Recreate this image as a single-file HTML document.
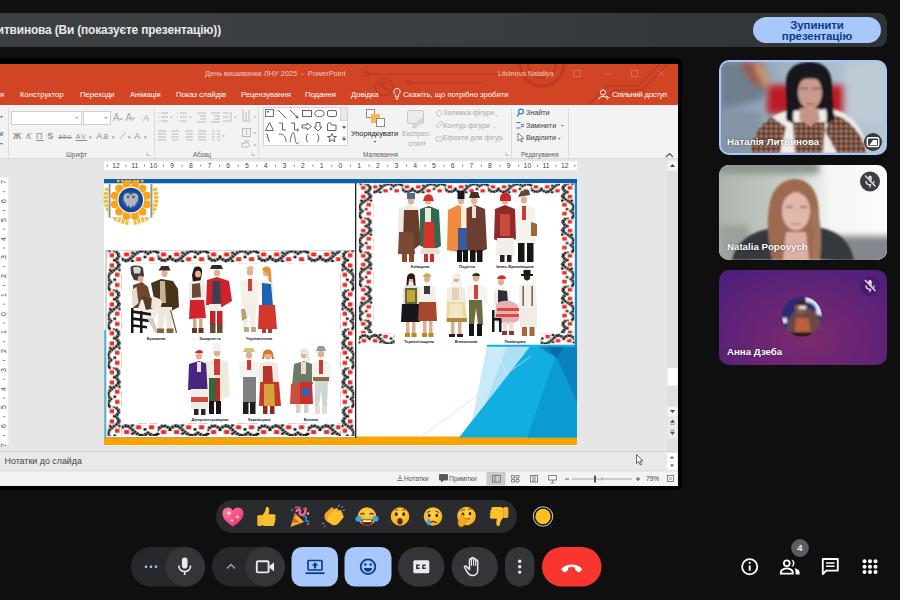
<!DOCTYPE html>
<html lang="uk">
<head>
<meta charset="utf-8">
<title>Meet</title>
<style>
*{box-sizing:border-box;margin:0;padding:0}
html,body{width:900px;height:600px;overflow:hidden;background:#101010;font-family:"Liberation Sans",sans-serif}
.abs{position:absolute}
#stage{position:relative;width:900px;height:600px;overflow:hidden;background:#0f0f10}
#topbar{left:-10px;top:13px;width:897px;height:34px;background:linear-gradient(90deg,#3c4043 0%,#393d40 55%,#2f3235 100%);border-radius:9px}
#toptitle{left:-200px;top:22px;width:421px;text-align:right;color:#e8eaed;font-size:11.9px;font-weight:bold;letter-spacing:-.15px;white-space:nowrap;line-height:17px}
#stopbtn{left:753px;top:17px;width:128px;height:26px;border-radius:13px;background:#a8c7fa;color:#0b3d8c;font-size:11.5px;font-weight:bold;line-height:10.4px;text-align:center;padding-top:3.2px;letter-spacing:-.1px}
#pptframe{left:-5px;top:58px;width:687px;height:432px;background:#000;border-radius:6px}
#ppt{left:0;top:64px;width:678px;height:422px;background:#e6e6e6;overflow:hidden}
#pptred{left:0;top:0;width:678px;height:41px;background:#d14524}
#ribbon{left:0;top:41px;width:678px;height:54px;background:#f3f3f3;border-bottom:1px solid #dadada}
.t{position:absolute;white-space:nowrap;line-height:10px}
.tt{color:#fff;font-size:7.65px;top:26px}
.ti{color:rgba(255,255,255,.72);font-size:7.4px;top:5px}
.rl{color:#3b3b3b;font-size:7.2px}
.rg{color:#a9a9a9;font-size:7.2px}
.gl{color:#5f5f5f;font-size:6.4px;top:86px}
.sep{position:absolute;top:44px;width:1px;height:50px;background:#dcdcdc}
.ru{position:absolute;color:#444;font-size:6.8px;line-height:8px;top:97.8px;width:12px;text-align:center;margin-left:-6px}
.rv{position:absolute;color:#444;font-size:7px;line-height:8px;left:0;width:8px;text-align:center;transform:rotate(-90deg);margin-top:-4px}
.sb{color:#555;font-size:6.6px;top:409.5px}
.nm{position:absolute;color:#fff;font-weight:bold;font-size:9.7px;white-space:nowrap;line-height:12px;text-shadow:0 0 2px rgba(0,0,0,.55)}
.tile{position:absolute;left:719px;width:168px;height:95px;border-radius:10px;overflow:hidden}
</style>
</head>
<body>
<div id="stage">
  <div class="abs" id="topbar"></div>
  <div class="abs" id="toptitle">Наталія Литвинова (Ви (показуєте презентацію))</div>
  <div class="abs" id="stopbtn">Зупинити<br>презентацію</div>
  <div class="abs" id="pptframe"></div>
  <div class="abs" id="ppt">
    <div class="abs" id="pptred"></div>
    <div class="abs" id="ribbon"></div>
    <svg class="abs" style="left:0;top:0" width="678" height="422" viewBox="0 64 678 422">
      <!-- title bar circuit decoration -->
      <g fill="none" stroke="#b43a1c" stroke-width="1.6" opacity=".75">
        <path d="M367 74H500"/><circle cx="367" cy="74" r="2.2"/>
        <path d="M409 83H482"/><circle cx="409" cy="83" r="2"/>
        <circle cx="384" cy="87" r="8.5"/><path d="M380 83l8 8M380 83h5M380 83v5" stroke-width="2"/>
        <path d="M520 64a22 22 0 0 0 44 0" stroke-width="3"/><path d="M528 64a14 14 0 0 0 28 0" stroke-width="2.5"/>
        <path d="M590 104l18-18h30l22-22M600 104l14-14h28l26-26"/>
      </g>
      <!-- window buttons -->
      <g stroke="rgba(255,255,255,.22)" stroke-width="1" fill="none">
        <rect x="573.5" y="70.500" width="7" height="6"/><path d="M605 74h6M631.500 70.500h6v6h-6zM658 70.500l6 6m0-6l-6 6"/>
      </g>
      <!-- bulb + share icons -->
      <g stroke="#fff" stroke-width="1" fill="none">
        <path d="M395.500 94.500a3.200 3.200 0 1 1 3 0v2.500h-3zM395.500 99h3"/>
        <circle cx="603" cy="92.500" r="2.600"/><path d="M598.500 99.500c.5-4 8.500-4 9 0M606 96l3.500 2"/>
      </g>
      <!-- Font group -->
      <g>
        <rect x="11.500" y="111.500" width="70" height="13" fill="#fff" stroke="#d0d0d0"/>
        <rect x="83.500" y="111.500" width="27" height="13" fill="#fff" stroke="#d0d0d0"/>
        <path d="M75 117l1.800 2 1.800-2zM104 117l1.800 2 1.800-2z" fill="#aaa"/>
        <path d="M0 116l1.500 2 1.500-2zM0 143l1.500 2 1.500-2z" fill="#666"/>
      </g>
      <!-- Paragraph group icons (greyed) -->
      <g stroke="#b9b9b9" stroke-width="1" fill="none">
        <path d="M158 113h1M158 117h1M158 121h1M161 113h7M161 117h7M161 121h7"/>
        <path d="M177 113h1M177 117h1M177 121h1M180 113h7M180 117h7M180 121h7"/>
        <path d="M197 113h9M200 116h6M200 119h6M197 122h9M211 113h9M214 116h6M214 119h6M211 122h9"/>
        <path d="M223 113h6M223 117h6M223 121h6M231 112v10"/>
        <path d="M158 131h8M158 134h8M158 137h8M158 140h8M171 131h8M172 134h6M171 137h8M172 140h6M185 131h8M186 134h7M185 137h8M186 140h7M198 131h8M198 134h8M198 137h8M198 140h8"/>
        <path d="M212 131h3M212 134h3M212 137h3M212 140h3M217 131h3M217 134h3M217 137h3M217 140h3"/>
        <path d="M243 110v10M246 112v8M249 110v10M242 121h9"/>
        <rect x="242.500" y="128.500" width="8" height="8"/><path d="M246.500 130v5"/>
        <path d="M242 143h6l2 2-2 2h-6zM244 141h5"/>
      </g>
      <path d="M170 116.500l1.300 1.500 1.300-1.500zM189 116.500l1.300 1.500 1.300-1.500zM234 116.500l1.300 1.500 1.300-1.500zM222 135.500l1.300 1.500 1.300-1.500zM253.500 116.500l1.300 1.500 1.300-1.500zM253.500 132.500l1.300 1.500 1.300-1.500zM253.500 144.500l1.300 1.500 1.300-1.500z" fill="#999"/>
      <!-- Shapes gallery -->
      <rect x="263.500" y="107.500" width="84" height="38" fill="#fff" stroke="#d4d4d4"/>
      <rect x="340.500" y="107.500" width="7" height="13" fill="#e9e9e9" stroke="#d4d4d4"/>
      <path d="M342.500 126.500l1.600 2 1.600-2zM342.500 138.500l1.600 2 1.600-2zM342 137h3.400" fill="#444" stroke="#444" stroke-width=".5"/>
      <g stroke="#555" stroke-width=".9" fill="none">
        <rect x="265.500" y="109.500" width="8" height="7" stroke="#3b6fb5"/><rect x="267" y="111" width="2" height="1.500" fill="#3b6fb5" stroke="none"/>
        <path d="M278 110l8 8M290 110l8 8M297 115.500l1.200 2.800-2.800-1.200"/>
        <rect x="302.500" y="110.500" width="9" height="6"/><ellipse cx="319.500" cy="113.500" rx="4.700" ry="3.200"/><rect x="327.500" y="110.500" width="9" height="6" rx="1.500"/>
        <path d="M265.500 130.500l4-8 4 8zM279 123h3.500v7H286M291 123h3.500v7h3.500M297 128.500l1.800 1.500-1.800 1.500"/>
        <path d="M302 125h5v-2l4.500 3.500-4.500 3.500v-2h-5zM316 122.500h4v4.500h2l-4 4-4-4h2zM327.500 130.500v-5.500c0-3 4-3 4 0h4.500v5.500z"/>
        <path d="M266 134l2 1-1 2 2 1-1 2 2 1.500M279 134c5 0 7 3 7 8M290 142c2-12 4-12 5-4s3 6 4 4"/>
        <path d="M308 134c-2 0-1 3-2 4 1 1 0 4 2 4M317 134c2 0 1 3 2 4-1 1 0 4-2 4"/>
        <path d="M332 133.500l1.300 3h3.200l-2.600 2 1 3.200-2.900-1.900-2.900 1.900 1-3.200-2.600-2h3.200z"/>
      </g>
      <!-- Arrange icon -->
      <g>
        <rect x="366.500" y="109.500" width="8" height="8" fill="#fff" stroke="#8a8a8a"/>
        <rect x="371" y="114" width="9" height="9" fill="#f5b65a"/>
        <rect x="376.500" y="118.500" width="8" height="8" fill="#fff" stroke="#8a8a8a"/>
        <path d="M373.500 141l1.400 1.800 1.400-1.800z" fill="#555"/>
      </g>
      <!-- Express styles (greyed) -->
      <g stroke="#c6c6c6" fill="none">
        <rect x="407.500" y="110.500" width="16" height="13" rx="2" fill="#ececec"/><path d="M412 127l10-9 2 2-9 8z" fill="#dcdcdc"/>
        <path d="M436 113l3-3 3 3-3 4zM436 126l5-5 2 2-5 5zM436 137h6v4h-6z"/>
      </g>
      <path d="M423.500 142.500l1.200 1.500 1.200-1.500zM495 115l1.200 1.500 1.200-1.500zM493 127l1.200 1.500 1.200-1.500zM501 138.500l1.200 1.500 1.200-1.500z" fill="#bbb"/>
      <!-- Editing icons -->
      <g fill="none">
        <circle cx="521" cy="111.500" r="2.400" stroke="#2b79c2" stroke-width="1.100"/><path d="M519.300 113.500l-2.300 2.800" stroke="#2b79c2" stroke-width="1.200"/>
        <path d="M516.500 122.500h4M516.500 128h4" stroke="#2b79c2" stroke-width="1"/><path d="M521 124.500h3M521 126.500h3" stroke="#8a4fa0" stroke-width="1"/>
        <path d="M518 133v8l2-2 1.500 3 1-.5-1.500-3h3z" stroke="#666" stroke-width=".8" fill="#fff"/>
      </g>
      <path d="M561 125l1.300 1.600 1.300-1.600zM558 138l1.300 1.600 1.300-1.600z" fill="#555"/>
      <!-- dialog launchers -->
      <path d="M147 152.500v3h3M252 152.500v3h3M506 152.500v3h3" stroke="#aaa" fill="none" stroke-width=".8"/>
      <!-- collapse caret -->
      <path d="M666 157l3.500-3.500 3.500 3.500" stroke="#555" stroke-width="1.200" fill="none"/>
      <!-- rulers -->
      <rect x="104" y="161.500" width="473" height="8.700" fill="#fff"/>
      <rect x="0" y="177.500" width="8.300" height="267.500" fill="#fff"/>
      <g stroke="#777" stroke-width=".8">
        <path d="M126 164.500v2.500M144.700 164.500v2.500M163.400 164.500v2.500M182.100 164.500v2.500M200.800 164.500v2.500M219.500 164.500v2.500M238.200 164.500v2.500M256.900 164.500v2.500M275.600 164.500v2.500M294.300 164.500v2.500M313 164.500v2.500M331.700 164.500v2.500M350.400 164.500v2.500M369.100 164.500v2.500M387.800 164.500v2.500M406.500 164.500v2.500M425.200 164.500v2.500M443.900 164.500v2.500M462.600 164.500v2.500M481.300 164.500v2.500M500 164.500v2.500M518.700 164.500v2.500M537.400 164.500v2.500M556.100 164.500v2.500M107.300 164.500v2.500M574.800 164.500v2.500"/>
      </g>
      <path id="vticks" d="M3 191.7h2.500M3 210.5h2.500M3 229.2h2.500M3 248.0h2.500M3 266.7h2.500M3 285.5h2.500M3 304.2h2.500M3 323.0h2.500M3 341.7h2.500M3 360.5h2.500M3 379.2h2.500M3 398.0h2.500M3 416.7h2.500M3 435.5h2.500" stroke="#777" stroke-width=".8"/>
      <!-- scrollbar -->
      <rect x="667" y="159" width="11" height="293" fill="#dfdfdf"/>
      <rect x="667.500" y="160.500" width="10" height="10" fill="#f4f4f4"/>
      <rect x="667.500" y="368" width="10" height="17.500" fill="#fff"/>
      <rect x="667.500" y="406.500" width="10" height="10" fill="#f4f4f4"/>
      <rect x="667.500" y="417.500" width="10" height="21" fill="#ececec"/>
      <path d="M670 167l2.500-3 2.500 3zM670 410l2.500 3 2.500-3z" fill="#444"/>
      <path d="M670.500 422.500l2-2.700 2 2.700zM670.500 424.300h4M670.500 430.200h4M670.500 432l2 2.700 2-2.700z" fill="#555" stroke="#555" stroke-width=".6"/>
      <!-- notes + status -->
      <rect x="0" y="451" width="678" height="1" fill="#d2d2d2"/>
      <rect x="0" y="452" width="678" height="19" fill="#e9e9e9"/>
      <rect x="0" y="470.500" width="678" height="1" fill="#d9d9d9"/>
      <rect x="0" y="471.500" width="678" height="15" fill="#f3f3f3"/>
      <rect x="667" y="453" width="10" height="8" fill="#fff"/><rect x="667" y="462" width="10" height="8" fill="#fff"/>
      <path d="M670 458.500l2-2.500 2 2.500zM670 464.500l2 2.500 2-2.500z" fill="#555"/>
      <path d="M636.500 454.500v9l2.200-2 1.600 3.500 1.300-.6-1.600-3.400h3z" fill="#fff" stroke="#444" stroke-width=".8"/>
      <!-- status icons -->
      <rect x="486.500" y="472" width="19" height="13.500" fill="#c9c9c9"/>
      <g stroke="#777" fill="none" stroke-width=".9">
        <path d="M397 480.500h6M398 478.500h4M400 475v3"/>
        <path d="M439.500 474.500h8v5.500h-4l-2 2v-2h-2z" fill="#555" stroke="#555"/>
        <rect x="492.500" y="475.500" width="8" height="6.500"/><path d="M495 475.500v6.500"/>
        <path d="M511.500 475.500h3v2.500h-3zM516 475.500h3v2.500h-3zM511.500 479.500h3v2.500h-3zM516 479.500h3v2.500h-3z"/>
        <rect x="530.500" y="475.500" width="7" height="6.500"/><path d="M533 475.500v6.500M535 475.500v6.500"/>
        <path d="M548.500 475.500h8v4.500h-8zM552.500 480v2.500M550.500 483h4"/>
        <path d="M565 479h4M636 479h4M638 477v4" stroke="#444"/>
        <path d="M572 479h60" stroke="#9a9a9a"/><path d="M602 477.500v3" stroke="#9a9a9a"/>
        <rect x="594" y="475.500" width="2" height="7" fill="#555" stroke="none"/>
        <rect x="667.500" y="475.500" width="6" height="6"/><path d="M669 477l3 3M672 477l-3 3" stroke-width=".6"/>
      </g>
    </svg>
    <div class="t ti" style="left:205px">День вишиванки ЛНУ 2025&nbsp; -&nbsp; PowerPoint</div>
    <div class="t ti" style="left:498px;font-size:7.1px">Litvinova Nataliya</div>
    <div class="t tt" style="left:0px">я</div>
    <div class="t tt" style="left:20px">Конструктор</div>
    <div class="t tt" style="left:80px">Переходи</div>
    <div class="t tt" style="left:130px">Анімація</div>
    <div class="t tt" style="left:176px">Показ слайдів</div>
    <div class="t tt" style="left:241px">Рецензування</div>
    <div class="t tt" style="left:305px">Подання</div>
    <div class="t tt" style="left:351px">Довідка</div>
    <div class="t tt" style="left:403px">Скажіть, що потрібно зробити</div>
    <div class="t tt" style="left:612px;letter-spacing:-.25px">Спільний доступ</div>
    <!-- font group glyph row -->
    <div class="t rg" style="left:113px;top:48px;font-size:10px;line-height:12px">A<span style="font-size:5px;vertical-align:top">▴</span>&nbsp;A<span style="font-size:5px;vertical-align:top">▾</span></div>
    <div class="t rg" style="left:143px;top:49px;font-size:9px"><i>A</i></div>
    <div class="t rg" style="left:13px;top:67px;font-size:9px;line-height:11px;letter-spacing:1.15px;color:#8e8e8e"><b>Ж</b> <i>К</i> <u>П</u> <b>S</b> <span style="font-size:6.5px;text-decoration:line-through">abc</span> <u style="font-size:7px">AV</u><span style="font-size:5px"> ▾ </span>Aa<span style="font-size:5px"> ▾ </span>&nbsp;<i>∕</i><span style="font-size:5px"> ▾ </span>A<span style="font-size:5px"> ▾</span></div>
    <div class="t rl" style="left:-1px;top:65px">и</div>
    <div class="t gl" style="left:66px">Шрифт</div>
    <div class="t gl" style="left:193px">Абзац</div>
    <div class="t gl" style="left:363px">Малювання</div>
    <div class="t gl" style="left:521px">Редагування</div>
    <div class="t rl" style="left:351px;top:65px;font-size:7.4px;color:#222">Упорядкувати</div>
    <div class="t rg" style="left:402px;top:65px;text-align:center;line-height:9.500px">Експрес-<br>стилі</div>
    <div class="t rg" style="left:443px;top:43.500px">Заливка фігури</div>
    <div class="t rg" style="left:443px;top:56.500px">Контур фігури</div>
    <div class="t rg" style="left:443px;top:69px">Ефекти для фігур</div>
    <div class="t rl" style="left:526px;top:43.500px">Знайти</div>
    <div class="t rl" style="left:526px;top:56.500px">Замінити</div>
    <div class="t rl" style="left:526px;top:69px">Виділити</div>
    <div class="sep" style="left:154px"></div><div class="sep" style="left:258px"></div><div class="sep" style="left:511px"></div><div class="sep" style="left:568px"></div>
    <div class="sep" style="left:8px"></div>
<div class="ru" style="left:116.0px">12</div><div class="ru" style="left:134.7px">11</div><div class="ru" style="left:153.4px">10</div><div class="ru" style="left:172.1px">9</div><div class="ru" style="left:190.8px">8</div><div class="ru" style="left:209.5px">7</div><div class="ru" style="left:228.2px">6</div><div class="ru" style="left:246.9px">5</div><div class="ru" style="left:265.6px">4</div><div class="ru" style="left:284.3px">3</div><div class="ru" style="left:303.0px">2</div><div class="ru" style="left:321.7px">1</div><div class="ru" style="left:340.4px">0</div><div class="ru" style="left:359.1px">1</div><div class="ru" style="left:377.8px">2</div><div class="ru" style="left:396.5px">3</div><div class="ru" style="left:415.2px">4</div><div class="ru" style="left:433.9px">5</div><div class="ru" style="left:452.6px">6</div><div class="ru" style="left:471.3px">7</div><div class="ru" style="left:490.0px">8</div><div class="ru" style="left:508.7px">9</div><div class="ru" style="left:527.4px">10</div><div class="ru" style="left:546.1px">11</div><div class="ru" style="left:564.8px">12</div>
<div class="rv" style="top:118.4px">7</div><div class="rv" style="top:137.1px">6</div><div class="rv" style="top:155.9px">5</div><div class="rv" style="top:174.6px">4</div><div class="rv" style="top:193.4px">3</div><div class="rv" style="top:212.1px">2</div><div class="rv" style="top:230.9px">1</div><div class="rv" style="top:249.6px">0</div><div class="rv" style="top:268.4px">1</div><div class="rv" style="top:287.1px">2</div><div class="rv" style="top:305.9px">3</div><div class="rv" style="top:324.6px">4</div><div class="rv" style="top:343.4px">5</div><div class="rv" style="top:362.1px">6</div><div class="rv" style="top:380.9px">7</div>
<div class="t" style="left:4.500px;top:392px;font-size:8.900px;color:#444;line-height:11px">Нотатки до слайда</div>
<div class="t sb" style="left:404px">Нотатки</div><div class="t sb" style="left:449px">Примітки</div><div class="t sb" style="left:646px;color:#444">79%</div>
<svg class="abs" style="left:0;top:0" width="678" height="422" viewBox="0 64 678 422">
<defs>
<pattern id="emb" width="50" height="14.500" patternUnits="userSpaceOnUse">
 <rect width="50" height="14.500" fill="#fff"/>
 <path d="M-3 4l3 3 3 3.500 3 1.500 3.500-1.500 3-2 3 2 3.500 1.500 3-1.500 3-3.500 3-3 3-2.500 3-1.500 3.500 1.500 3 2 3-2 3.500-1.500 3 1.500 3 2.500 3 3" fill="none" stroke="#151515" stroke-width="3.500" stroke-dasharray="2.400 .700"/>
 <path d="M11 5.500h3v3h-3zM36 6h3v3h-3zM-1 1h3v2.500h-3zM23.500 1.500h3v2.500h-3zM48.500 1h3v2.500h-3zM23.500 11h3v2.500h-3z" fill="#1a1a1a"/>
 <rect x="3.500" y="2.300" width="5.200" height="4.500" fill="#ee2a20"/>
 <rect x="16.500" y="2.300" width="5.200" height="4.500" fill="#ee2a20"/>
 <rect x="28.500" y="7.800" width="5.200" height="4.500" fill="#ee2a20"/>
 <rect x="41.500" y="7.800" width="5.200" height="4.500" fill="#ee2a20"/>
</pattern>
<filter id="b1" x="-10%" y="-10%" width="120%" height="120%"><feGaussianBlur stdDeviation=".55"/></filter>
<filter id="b0" x="-5%" y="-5%" width="110%" height="110%"><feGaussianBlur stdDeviation=".35"/></filter>
</defs>
<rect x="104" y="179" width="473" height="266.500" fill="#fff"/>
<rect x="104" y="179" width="473" height="4.300" fill="#0d5fa6"/>
<rect x="104" y="436.500" width="473" height="8.500" fill="#f7a400"/>
<rect x="104" y="330" width="2.200" height="108" fill="#5cc4e8"/>
<g>
<path d="M487 346.500h43l-58.200 74.500z" fill="#c9ebf8"/>
<path d="M507 346.500h23l-44.700 57.300z" fill="#aee0f4"/>
<path d="M530 346.500H577V437.500H459z" fill="#12aee2"/>
<path d="M557 352l20-5.500V437.500H527z" fill="#0a9bd3"/>
<path d="M538 346.500H577V402L557 358z" fill="#0b82c0"/>
<path d="M547 346.500l10 12 6-12z" fill="#0a6aa8"/>
<path d="M420 437.500L531 356" stroke="#bfe6f6" stroke-width=".8" fill="none"/>
<path d="M495 346.500l12 29" stroke="#d5f0fa" stroke-width=".7" fill="none"/>
</g>
<g filter="url(#b0)">
<rect x="106" y="250.500" width="249.500" height="187" fill="#fff" stroke="#8a8a8a" stroke-width=".7"/>
<g transform="translate(107.5 250.5) scale(1.000 0.870)"><rect width="247.0" height="14.500" fill="url(#emb)"/></g>
<g transform="translate(107.5 436.0) scale(1.000 -0.870)"><rect width="247.0" height="14.500" fill="url(#emb)"/></g>
<g transform="translate(107.5 250.5) rotate(90) scale(0.780 -0.970)"><rect width="237.8" height="14.500" fill="url(#emb)"/></g>
<g transform="translate(340.5 250.5) rotate(90) scale(0.780 0.970)"><rect y="-14.500" width="237.8" height="14.500" fill="url(#emb)"/></g>
</g>
<rect x="355" y="183" width="1.300" height="255" fill="#222"/>
<g filter="url(#b0)">
<rect x="357.500" y="183.500" width="218" height="160.500" fill="#fff"/>
<g transform="translate(358.7 183.6) scale(0.860 0.720)"><rect width="250.9" height="14.500" fill="url(#emb)"/></g>
<g transform="translate(358.7 183.6) rotate(90) scale(0.680 -1.000)"><rect width="236.0" height="14.500" fill="url(#emb)"/></g>
<g transform="translate(560.0 183.6) rotate(90) scale(0.680 1.000)"><rect y="-14.500" width="236.0" height="14.500" fill="url(#emb)"/></g>
<g transform="translate(358.7 344.2) scale(0.860 -0.760)"><rect width="41.9" height="14.500" fill="url(#emb)"/></g>
<g transform="translate(574.5 344.2) scale(-0.860 -0.760)"><rect width="39.5" height="14.500" fill="url(#emb)"/></g>
</g>
<path d="M487 344.800h90v2h-90z" fill="#12aee2"/>
<rect x="574.800" y="183" width="2.200" height="165" fill="#1287c9"/>
<g filter="url(#b1)">
<path d="M130.500 267c3-2 10-2 12.500 1l1 8-4 5-6-1-3-6z" fill="#3a3a40"/>
<path d="M133 267.500c3-1.500 6-1 8 1l-1 5-6 0z" fill="#d8d4cc"/>
<ellipse cx="140.5" cy="279.0" rx="2.8" ry="3.3" fill="#e2b08c"/>
<path d="M133 285l9-3 6 5 3 12-6 9-12 0z" fill="#6e4630"/>
<path d="M131.500 290l5-3 2 16-6 5z" fill="#e6ddd2"/>
<path d="M141 300l12-3 7 12-5 10-14 3-4-10z" fill="#f1ede6"/>
<path d="M142 296l10 2 4 10-10 2z" fill="#5a3a2c"/>
<path d="M131 310l20 3 0 2.800-20-3zM131 317l22 3 0 2.800-22-3zM131 324l16 2 0 2.500-16-2zM131 308h2.500v25h-2.500zM140 311h2.500v22h-2.500z" fill="#141414"/>
<path d="M147 318l6 0 5 14-3 1z" fill="#d5ccc0"/>
<ellipse cx="164.5" cy="273.5" rx="3.0" ry="3.5" fill="#e2b08c"/>
<path d="M158.500 270.500h12l-2-4.500h-7z" fill="#3a2c24"/>
<path d="M151 283l10-4 12 2 5 8 1 18-8 4-10-1-6-6z" fill="#46321f"/>
<path d="M160 281l5 0 1 22-6 0z" fill="#c4b296"/>
<path d="M152 296l8 3 2 3-2 9-9-3z" fill="#eee8df"/>
<path d="M158 307l14 0 0 22-5 0-2-16-2 16-5 0z" fill="#ece6dc"/>
<path d="M157 328.500h7v4.500h-7zM166.500 328.500h7v4.500h-7z" fill="#8a6238"/>
<path d="M170 310l1.200 0 6 23-1.400 0z" fill="#7a5a3a"/>
<path d="M194 268c4-3 9-1 8 5l-2 10-7 0-1-8z" fill="#241a18"/>
<ellipse cx="198.0" cy="274.0" rx="3.0" ry="3.5" fill="#e2b08c"/>
<path d="M189 282l14-2 3 16-5 6-12-2z" fill="#f0ece6"/>
<path d="M192 284l8-1 1 14-9 1z" fill="#6c4a36"/>
<path d="M190 300l14 0 2 18-17 1z" fill="#d4242a"/>
<path d="M193 319h3.500v10h-3.500zM199 319h3.500v10h-3.500z" fill="#caa88a"/>
<path d="M192 328h5v5h-5zM198.500 328h5v5h-5z" fill="#5a3a26"/>
<ellipse cx="217.0" cy="273.0" rx="3.2" ry="3.6" fill="#e2b08c"/>
<path d="M210 269h13l-2-4h-9z" fill="#2e2a2a"/>
<path d="M207 280l10-3 12 4 3 20-10 6-16-2z" fill="#cf2229"/>
<path d="M213 281l7 0 1 22-9 1z" fill="#3c3f52"/>
<path d="M209 304l12 0 0 8-12 0z" fill="#f0ece6"/>
<path d="M210 311l5.500 0 0 14-5.500 0zM217 311l5.500 0 0 14-5.500 0z" fill="#c3202a"/>
<path d="M210 324h5.500v9h-5.500zM217 324h5.500v9h-5.500z" fill="#6a4a30"/>
<ellipse cx="250.0" cy="272.0" rx="3.2" ry="3.6" fill="#e2b08c"/>
<path d="M246 269c2-4 7-4 8 0z" fill="#d8c48a"/>
<path d="M240 281l10-3 8 3 1 24-18 0z" fill="#f4f1ec"/>
<path d="M248 279h4v12h-4z" fill="#c8423a"/>
<path d="M243 305l13 0-1 23-4 0-2-16-2 16-4 0z" fill="#f1ede6"/>
<path d="M241 309l4 0 2 9-5 3z" fill="#b9a070"/>
<path d="M244 327h5v5h-5zM251 327h5v5h-5z" fill="#b9a78e"/>
<ellipse cx="266.0" cy="273.0" rx="3.0" ry="3.5" fill="#e2b08c"/>
<path d="M262 270c1-5 9-5 9 2l1 14-3 0-1-12z" fill="#e0953a"/>
<path d="M259 282l7-2 7 3 1 14-14 1z" fill="#f2efe9"/>
<path d="M262 283l9 1 2 22-11 0z" fill="#1f63b4"/>
<path d="M259 305l16 0 2 24-19 0z" fill="#d3382f"/>
<path d="M262 328h4v5h-4zM268 328h4v5h-4z" fill="#b83a30"/>
<ellipse cx="199.0" cy="356.0" rx="3.2" ry="3.6" fill="#e2b08c"/>
<path d="M195 353c1-4 8-4 8 0z" fill="#c62a2a"/>
<path d="M189 364l10-3 9 3 1 25-21 1z" fill="#4a2780"/>
<path d="M197 362h4v10h-4z" fill="#e9e4ee"/>
<path d="M191 389l17 0 0 9-17 0z" fill="#f2efea"/>
<path d="M191 397l17 0 0 6-17 0z" fill="#cf4a44"/>
<path d="M191 402l17 0 0 7-17 0z" fill="#efece6"/>
<path d="M194 409h4.500v6h-4.500zM201 409h4.500v6h-4.500z" fill="#2a2020"/>
<ellipse cx="217.0" cy="353.0" rx="3.2" ry="3.6" fill="#e2b08c"/>
<path d="M213 343h8v8h-8z" fill="#f3f1ee"/>
<path d="M206 362l10-4 12 4 2 34-9 4-13-2z" fill="#f1ebdc"/>
<path d="M214 359h6v16h-6z" fill="#cf3a34"/>
<path d="M209 378l11 0 0 24-11 0z" fill="#2e6a3a"/>
<path d="M215.500 378h4.500v24h-4.500z" fill="#b82a2a"/>
<path d="M209 401h5v13h-5zM216 401h5v13h-5z" fill="#151515"/>
<ellipse cx="249.0" cy="355.0" rx="3.2" ry="3.6" fill="#e2b08c"/>
<path d="M243 352h12l-2-4h-8z" fill="#d9c07a"/>
<path d="M239 362l10-3 9 3 1 16-19 1z" fill="#f5f3ef"/>
<path d="M247 360h4v10h-4z" fill="#c63a34"/>
<path d="M243 377l13 0 0 26-13 0z" fill="#7e7f82"/>
<path d="M243 402h5.500v12h-5.500zM250 402h5.500v12h-5.500z" fill="#1a1a1a"/>
<ellipse cx="268.0" cy="356.0" rx="3.2" ry="3.6" fill="#e2b08c"/>
<path d="M263 354c0-6 10-6 10 0l1 5-2 0-1-5-6 0-1 5-2 0z" fill="#d8742a"/>
<path d="M259 364l9-3 10 3 1 18-20 0z" fill="#f0e9e0"/>
<path d="M263 366l9 0 1 16-10 0z" fill="#b8322c"/>
<path d="M260 382l19 0 2 24-22 0z" fill="#c23a2c"/>
<path d="M264 384l10 0 1 22-11 0z" fill="#d9a23a"/>
<path d="M263 406h4.500v8h-4.500zM270 406h4.500v8h-4.500z" fill="#8a2a22"/>
<ellipse cx="304.0" cy="355.0" rx="3.2" ry="3.6" fill="#e2b08c"/>
<path d="M300 352c1-5 9-5 9 1l1 8-3 0-1-7-4 0z" fill="#e9e6e0"/>
<path d="M294 364l10-3 8 3 1 20-21 2z" fill="#6d7a68"/>
<path d="M301 362h5v12h-5z" fill="#ecdcd4"/>
<path d="M291 384l10-2 0 22-11 0z" fill="#c9503c"/>
<path d="M300 382l12 0 1 22-13 0z" fill="#c8322c"/>
<path d="M302 388l8 0 0 8-8 0z" fill="#3a62a8"/>
<path d="M296 404h4.500v9h-4.500zM304 404h4.500v9h-4.500z" fill="#d8cfc4"/>
<ellipse cx="321.0" cy="354.0" rx="3.2" ry="3.6" fill="#e2b08c"/>
<path d="M316 351h10l-2-5h-6z" fill="#9a9c98"/>
<path d="M312 362l9-3 9 3 1 20-19 0z" fill="#f3f1ec"/>
<path d="M319 360h4v14h-4z" fill="#c43c34"/>
<path d="M313 377l16 0 0 4-16 0z" fill="#8a6a48"/>
<path d="M315 381l13 0-1 25-4.500 0-1.500-16-2 16-4 0z" fill="#cfd6d2"/>
<path d="M315 406h5v8h-5zM322 406h5v8h-5z" fill="#e2dcd2"/>
<ellipse cx="411.0" cy="201.0" rx="3.2" ry="3.6" fill="#e2b08c"/>
<path d="M407 193h8v6h-8z" fill="#566a8a"/>
<path d="M399 208l10-3 10 3 1 22-10 4-12-2z" fill="#efe9e0"/>
<path d="M404 210l14 0 3 34-8 6-10-8z" fill="#6a3e2a"/>
<path d="M399 232l14 0 2 22-17 0z" fill="#7a4a34"/>
<path d="M402 254h5v8h-5zM409 254h5v8h-5z" fill="#8a4a2a"/>
<ellipse cx="428.0" cy="201.0" rx="3.2" ry="3.6" fill="#e2b08c"/>
<path d="M424 198c1-5 8-5 9 0l1 3-11 0z" fill="#d0302c"/>
<path d="M420 209l9-3 10 4 2 36-8 4-13-4z" fill="#2f6a4e"/>
<path d="M425 208h6v14h-6z" fill="#efe8e0"/>
<path d="M424 222l10 0 1 28-12 0z" fill="#d5302c"/>
<path d="M421 248l18 0 1 6-20 0z" fill="#e8e0d8"/>
<path d="M424 254h4v8h-4zM430 254h4v8h-4z" fill="#c8322c"/>
<ellipse cx="461.0" cy="201.0" rx="3.0" ry="3.6" fill="#e2b08c"/>
<path d="M457.500 191h7v8h-7z" fill="#15151a"/>
<path d="M448 210l10-5 9 3 0 40-9 4-11-2z" fill="#f08a3c"/>
<path d="M461 206h5v22h-5z" fill="#f3efe8"/>
<path d="M458 228l9 0 0 24-9 0z" fill="#3a5a9a"/>
<path d="M457 250h5v12h-5zM463 250h5v12h-5z" fill="#141414"/>
<ellipse cx="474.0" cy="201.0" rx="3.0" ry="3.6" fill="#e2b08c"/>
<path d="M469 198h11l-2-6h-7z" fill="#4a2e26"/>
<path d="M467 208l8-3 10 4 2 40-9 4-11-3z" fill="#6e3e30"/>
<path d="M472 206h4v12h-4z" fill="#e8e0d8"/>
<path d="M470 250h5.500v12h-5.500zM477 250h5.500v12h-5.500z" fill="#1a1614"/>
<ellipse cx="505.0" cy="201.0" rx="3.2" ry="3.6" fill="#e2b08c"/>
<path d="M500 198c0-7 11-7 11 0l0 3-11 0z" fill="#c8282c"/>
<path d="M495 209l10-4 10 4 1 30-11 6-11-6z" fill="#8e2a2c"/>
<path d="M500 214l10 0 0 22-10 0z" fill="#c84a3c"/>
<path d="M497 238l17 0 1 18-19 0z" fill="#f3efe8"/>
<path d="M500 255h4.500v7h-4.500zM507 255h4.500v7h-4.500z" fill="#2a1a1a"/>
<ellipse cx="524.0" cy="200.0" rx="3.2" ry="3.6" fill="#e2b08c"/>
<path d="M518 197l12-2-1-5-8 1z" fill="#5a4a3a"/>
<path d="M516 208l9-3 10 3 1 36-20 0z" fill="#f5f3ee"/>
<path d="M522 206h4v14h-4z" fill="#c43c34"/>
<path d="M531 222l6 2 0 12-6 0z" fill="#9a6a3e"/>
<path d="M518 243l6.500 0 0 19-6.500 0zM527 243l6.500 0 0 19-6.500 0z" fill="#151515"/>
<ellipse cx="411.0" cy="279.0" rx="3.0" ry="3.4" fill="#e2b08c"/>
<path d="M407 277c1-5 8-5 8 0l1 14-2 0-1-12-4 0-1 12-2 0z" fill="#2a1c16"/>
<path d="M403 287l8-3 8 3 0 17-16 0z" fill="#e9e2d4"/>
<path d="M405 288l12 0 0 16-12 0z" fill="#5a6a3a"/>
<path d="M407 290l8 0 0 12-8 0z" fill="#c8a23a"/>
<path d="M402 304l17 0 1 18-19 0z" fill="#17161a"/>
<path d="M406 322h3.500v11h-3.500zM412 322h3.500v11h-3.500z" fill="#d8b090"/>
<path d="M405 333h5v4h-5zM411.500 333h5v4h-5z" fill="#b8862a"/>
<ellipse cx="427.0" cy="279.0" rx="3.0" ry="3.4" fill="#e2b08c"/>
<path d="M423 277c1-5 8-5 8 0z" fill="#c9a85a"/>
<path d="M419 287l8-3 8 3 1 15-17 0z" fill="#f3f0ea"/>
<path d="M424 286h6v8h-6z" fill="#3a3a3a"/>
<path d="M419 302l17 0 1 19-19 0z" fill="#a8462e"/>
<path d="M423 321h3.500v12h-3.500zM429 321h3.500v12h-3.500z" fill="#d8b090"/>
<path d="M422 333h5v4h-5zM428.500 333h5v4h-5z" fill="#b8862a"/>
<ellipse cx="456.0" cy="279.0" rx="3.0" ry="3.4" fill="#e2b08c"/>
<path d="M452 277c0-6 9-6 9 0l1 8-3 0 0-6-5 0 0 6-3 0z" fill="#f2efe8"/>
<path d="M447 288l9-3 9 3 1 14-19 0z" fill="#f1ece2"/>
<path d="M452 288h7v12h-7z" fill="#e2d2b8"/>
<path d="M447 302l18 0 2 20-21 0z" fill="#ecd9a0"/>
<path d="M450 304l12 0 1 14-14 0z" fill="#f3e8c4"/>
<path d="M447 318l20 0 0 4-20 0z" fill="#b8863a"/>
<path d="M451 322h3.500v12h-3.500zM458 322h3.500v12h-3.500z" fill="#d8b090"/>
<path d="M449 334h6v3h-6zM457 334h6v3h-6z" fill="#2a1a14"/>
<ellipse cx="476.0" cy="278.0" rx="3.2" ry="3.6" fill="#e2b08c"/>
<path d="M472 276c1-4 8-4 8 0z" fill="#3a2a20"/>
<path d="M467 287l9-3 10 3 2 16-5 0-1-8-1 8-13 0z" fill="#f6f4f0"/>
<path d="M474 285h4v14h-4z" fill="#c8443a"/>
<path d="M469 300l13 0 1 25-5 0-2-17-2 17-5 0z" fill="#6e6a42"/>
<path d="M469 324h5v12h-5zM477 324h5v12h-5z" fill="#141414"/>
<ellipse cx="501.0" cy="282.0" rx="3.0" ry="3.4" fill="#e2b08c"/>
<path d="M497 279c1-5 9-5 9 0z" fill="#c8322c"/>
<path d="M494 290l8-3 8 4 0 14-16 0z" fill="#f1ede6"/>
<path d="M498 290l9 1 1 12-10 0z" fill="#2e2a3a"/>
<path d="M496 304c6-5 18-4 22 2l1 14c-6 5-18 5-24 0z" fill="#e8b0b0"/>
<path d="M497 308l22 0 0 3-22 0zM496 314l23 0 0 3-23 0z" fill="#d8484a"/>
<path d="M492 310h2.500v22h-2.500zM492 318l8 0 0 2.500-8 0zM499 318h2.500v14h-2.500z" fill="#151515"/>
<path d="M503 322h4v9h-4zM509 322h4v9h-4z" fill="#e8e0d8"/>
<path d="M502 331h5v4h-5zM509 331h5v4h-5z" fill="#8a3a2a"/>
<ellipse cx="527.0" cy="277.0" rx="3.2" ry="3.4" fill="#2a2220"/>
<path d="M521 274h12l0 2-12 0zM523.500 270h7v5h-7z" fill="#1a1616"/>
<path d="M519 285l8-3 9 3 1 24-18 0z" fill="#f4f1ea"/>
<path d="M523 287l0 18M532 287l0 18" fill="#6a4a3a"/>
<path d="M522.500 286h1.300v20h-1.300zM531.500 286h1.300v20h-1.300z" fill="#6a3a30"/>
<path d="M520 308l17 0 0 19-17 0z" fill="#f1ede4"/>
<path d="M522 327h5v9h-5zM529.500 327h5v9h-5z" fill="#a8663a"/>
</g>
<text x="156.0" y="339.5" font-family="Liberation Sans, sans-serif" font-size="3.9" font-weight="bold" fill="#262626" text-anchor="middle">Буковина</text>
<text x="210.0" y="339.5" font-family="Liberation Sans, sans-serif" font-size="3.9" font-weight="bold" fill="#262626" text-anchor="middle">Закарпаття</text>
<text x="259.0" y="339.5" font-family="Liberation Sans, sans-serif" font-size="3.9" font-weight="bold" fill="#262626" text-anchor="middle">Чернівеччина</text>
<text x="210.0" y="421.0" font-family="Liberation Sans, sans-serif" font-size="3.9" font-weight="bold" fill="#262626" text-anchor="middle">Дніпропетровщина</text>
<text x="259.0" y="421.0" font-family="Liberation Sans, sans-serif" font-size="3.9" font-weight="bold" fill="#262626" text-anchor="middle">Харківщина</text>
<text x="311.0" y="421.0" font-family="Liberation Sans, sans-serif" font-size="3.9" font-weight="bold" fill="#262626" text-anchor="middle">Волинь</text>
<text x="420.0" y="268.0" font-family="Liberation Sans, sans-serif" font-size="3.9" font-weight="bold" fill="#262626" text-anchor="middle">Київщина</text>
<text x="467.0" y="268.0" font-family="Liberation Sans, sans-serif" font-size="3.9" font-weight="bold" fill="#262626" text-anchor="middle">Поділля</text>
<text x="515.0" y="268.0" font-family="Liberation Sans, sans-serif" font-size="3.9" font-weight="bold" fill="#262626" text-anchor="middle">Івано-Франківщина</text>
<text x="419.0" y="342.5" font-family="Liberation Sans, sans-serif" font-size="3.9" font-weight="bold" fill="#262626" text-anchor="middle">Тернопільщина</text>
<text x="466.0" y="342.5" font-family="Liberation Sans, sans-serif" font-size="3.9" font-weight="bold" fill="#262626" text-anchor="middle">Вінниччина</text>
<text x="515.0" y="342.5" font-family="Liberation Sans, sans-serif" font-size="3.9" font-weight="bold" fill="#262626" text-anchor="middle">Львівщина</text>
<g filter="url(#b0)">
<path d="M107.500 188c-4 12-1 24 9 31l13 4.500M154.500 188c4 12 1 24-9 31l-13 4.500" fill="none" stroke="#f2bc42" stroke-width="4.600" stroke-dasharray="3 1"/>
<path d="M117 181l28 0" stroke="#f2bc42" stroke-width="2.600" stroke-dasharray="2.500 1.500"/>
<rect x="108.500" y="183.500" width="44" height="34" fill="#fff" stroke="#c2c2c2" stroke-width=".7"/>
<path d="M109.800 184v33M151.200 184v33" stroke="#8f8f8f" stroke-width="1.500"/>
<g fill="#f8a31c">
<circle cx="146.8" cy="204.3" r="3.900"/>
<circle cx="142.5" cy="211.7" r="3.900"/>
<circle cx="135.1" cy="216.0" r="3.900"/>
<circle cx="126.5" cy="216.0" r="3.900"/>
<circle cx="119.1" cy="211.7" r="3.900"/>
<circle cx="114.8" cy="204.3" r="3.900"/>
<circle cx="114.8" cy="195.7" r="3.900"/>
<circle cx="119.1" cy="188.3" r="3.900"/>
<circle cx="126.5" cy="184.0" r="3.900"/>
<circle cx="135.1" cy="184.0" r="3.900"/>
<circle cx="142.5" cy="188.3" r="3.900"/>
<circle cx="146.8" cy="195.7" r="3.900"/>
<circle cx="130.800" cy="200" r="14.600"/></g>
<circle cx="130.800" cy="200" r="13.400" fill="#fff"/>
<circle cx="130.800" cy="200" r="12.300" fill="#184892"/>
<ellipse cx="130.800" cy="200" rx="9" ry="8.500" fill="#2b5cab"/>
<path d="M123.500 197.500c0-4.500 4.500-5.500 7.300-2.300 2.800-3.200 7.300-2.200 7.300 2.300 0 3-1 5-2.500 6l-1 3.500-1.500-2-2.300 3-2.300-3-1.500 2-1-3.500c-1.500-1-2.500-3-2.500-6z" fill="#b4b8be"/>
<circle cx="128" cy="197" r="1.400" fill="#5a5f68"/><circle cx="133.600" cy="197" r="1.400" fill="#5a5f68"/>
</g>
</svg>
  </div>
  <!-- ===== participant tiles ===== -->
  <div class="tile" style="top:60px;background:#a8c7fa">
    <svg class="abs" style="left:2px;top:2px;border-radius:8px" width="164" height="91" viewBox="721 62 164 91">
      <defs>
        <filter id="tb3" x="-20%" y="-20%" width="140%" height="140%"><feGaussianBlur stdDeviation="3"/></filter>
        <filter id="tb1" x="-20%" y="-20%" width="140%" height="140%"><feGaussianBlur stdDeviation="1.1"/></filter>
        <linearGradient id="t1bg" x1="0" x2="1" y1="0" y2="0"><stop offset="0" stop-color="#7f95aa"/><stop offset=".5" stop-color="#a9b9c8"/><stop offset="1" stop-color="#b7c6d3"/></linearGradient>
        <pattern id="vysh" width="5" height="5" patternUnits="userSpaceOnUse"><rect width="5" height="5" fill="#6e3226"/><rect width="2.500" height="2.500" fill="#b9a08a"/><rect x="2.500" y="2.500" width="2.500" height="2.500" fill="#3a1c16"/></pattern>
      </defs>
      <rect x="721" y="62" width="164" height="91" fill="url(#t1bg)"/>
      <g filter="url(#tb3)">
        <path d="M721 62h36l14 22-10 16-40 8z" fill="#6f7e8e"/>
        <path d="M738 62h24l8 20-14 6z" fill="#9a5650"/>
        <path d="M754 64l6 0 10 20-6 2z" fill="#d8a272"/>
        <rect x="767" y="85" width="78" height="29" fill="#bd1c28"/>
        <rect x="845" y="62" width="40" height="60" fill="#bccad6"/>
        <rect x="721" y="112" width="40" height="41" fill="#8494a4"/>
      </g>
      <g filter="url(#tb1)">
        <path d="M786 84c0-16 10-22 24-22s22 8 22 24c0 14 2 26 0 36l-12 4-24-2-10-6c2-10 0-22 0-34z" fill="#17171b"/>
        <path d="M750 153c2-20 14-36 36-42l46-2c20 4 32 20 36 44z" fill="#f1ece8"/>
        <path d="M750 153c2-14 8-28 22-36l14 10-6 26z" fill="url(#vysh)"/>
        <path d="M832 114c16 4 30 18 35 39h-30l-12-22z" fill="url(#vysh)"/>
        <path d="M793 122h32l-2 31h-28z" fill="url(#vysh)"/>
        <path d="M800 108h18l2 12-10 6-11-6z" fill="#c39684"/>
        <ellipse cx="810" cy="92.500" rx="12" ry="16.500" fill="#c99a8c"/>
        <path d="M797 80c4-8 22-9 27 0l1 3c-8-6-21-6-29 0z" fill="#1a1a1e"/>
        <path d="M800 88.500h8M812 88.500h9" stroke="#6a5656" stroke-width="1.600"/>
        <path d="M806 104h8" stroke="#9a5a58" stroke-width="1.400"/>
        <path d="M824 100c2 8 4 16 2 24l8-4c0-10-2-24-4-34z" fill="#17171b"/>
        <path d="M796 100c-2 8-4 16-2 24l-8-4c0-10 2-24 4-34z" fill="#17171b"/>
      </g>
      <circle cx="873" cy="142" r="9" fill="#2b2c30" opacity=".92"/>
      <rect x="867.300" y="137.800" width="11.400" height="8.600" rx="1.600" fill="none" stroke="#fff" stroke-width="1.500"/>
      <path d="M869.500 145l3.500-5h4v5z" fill="#fff"/>
    </svg>
    <div class="nm" style="left:8px;top:76px">Наталія Литвинова</div>
  </div>

  <div class="tile" style="top:165px;background:#c4cbc4">
    <svg class="abs" style="left:0;top:0" width="168" height="95" viewBox="719 165 168 95">
      <defs>
        <linearGradient id="t2bg" x1="0" x2="1" y1="0" y2="0"><stop offset="0" stop-color="#aeb6ac"/><stop offset=".45" stop-color="#c9cfc8"/><stop offset=".66" stop-color="#f4f6f4"/><stop offset="1" stop-color="#fbfcfb"/></linearGradient>
      </defs>
      <rect x="719" y="165" width="168" height="95" fill="url(#t2bg)"/>
      <g filter="url(#tb3)">
        <rect x="719" y="160" width="100" height="14" fill="#8e9890"/>
        <rect x="830" y="236" width="64" height="30" fill="#85878e"/>
        <rect x="719" y="225" width="30" height="40" fill="#9aa39a"/>
      </g>
      <g filter="url(#tb1)">
        <path d="M732 260c4-18 18-28 40-32l50 0c18 4 28 14 32 32z" fill="#35383d"/>
        <path d="M772 260c-4-20-6-40-2-58 3-14 12-22 24-23 14 0 22 10 24 24 2 18 2 38-2 57z" fill="#9c6b50"/>
        <path d="M786 232h20l3 28h-26z" fill="#dcb0a4"/>
        <ellipse cx="796" cy="211" rx="14" ry="19.500" fill="#e2b8ac"/>
        <path d="M781 204c2-14 8-20 16-20s14 8 15 20c-6-8-12-12-16-12s-10 4-15 12z" fill="#9c6b50"/>
        <path d="M786 207h7M800 207h7" stroke="#7a5a58" stroke-width="1.500"/>
        <path d="M791 224h9" stroke="#d47a7a" stroke-width="1.800"/>
        <path d="M810 210c4 14 4 34 2 50l8 0c2-18 2-36-4-52z" fill="#a3735a"/>
      </g>
      <circle cx="870" cy="181.500" r="10" fill="#3b3e42"/>
      <g stroke="#e6e6e6" stroke-width="1.300" fill="none">
        <rect x="868.300" y="175.500" width="3.400" height="7" rx="1.700" fill="#e6e6e6" stroke="none"/>
        <path d="M866 181c0 5 8 5 8 0M870 185v2.500"/>
        <path d="M864.500 176l11 11" stroke="#3b3e42" stroke-width="2.600"/><path d="M865 175.500l10.500 11"/>
      </g>
    </svg>
    <div class="nm" style="left:8px;top:76px">Natalia Popovych</div>
  </div>

  <div class="tile" style="top:270px;background:radial-gradient(ellipse 75% 95% at 52% 72%,#7c2a6c 0%,#6a2574 40%,#4c1e7c 100%)">
    <svg class="abs" style="left:0;top:0" width="168" height="95" viewBox="719 270 168 95">
      <defs><clipPath id="avc"><circle cx="802" cy="316.500" r="20"/></clipPath></defs>
      <g clip-path="url(#avc)" filter="url(#tb1)">
        <rect x="780" y="295" width="44" height="44" fill="#2c2a78"/>
        <path d="M806 296c10 2 16 10 16 20l-6-2c2-8-4-12-10-12z" fill="#dfe6f4"/>
        <path d="M786 338c0-16 6-28 16-30s20 8 20 22l-6 8z" fill="#6a4a44"/>
        <path d="M796 318h12l4 20h-18z" fill="#b9623a"/>
        <ellipse cx="801" cy="308" rx="6" ry="6.500" fill="#8a5a4a"/>
        <path d="M794 305c2-6 12-6 14 0z" fill="#3a2420"/>
        <rect x="799" y="306" width="7" height="3" fill="#d8dce0"/>
        <path d="M790 332h22v6h-22z" fill="#2a1c1c"/>
        <rect x="782" y="318" width="5" height="5" fill="#d8dcf0"/>
      </g>
      <circle cx="870" cy="286" r="10" fill="#4b1b72"/>
      <g stroke="#f0eaf4" stroke-width="1.300" fill="none">
        <rect x="868.300" y="280" width="3.400" height="7" rx="1.700" fill="#f0eaf4" stroke="none"/>
        <path d="M866 285.500c0 5 8 5 8 0M870 289.500v2.500"/>
        <path d="M864.500 280.500l11 11" stroke="#4b1b72" stroke-width="2.600"/><path d="M865 280l10.500 11"/>
      </g>
    </svg>
    <div class="nm" style="left:8px;top:75.500px">Анна Дзеба</div>
  </div>
  <!-- ===== emoji reaction bar ===== -->
  <div class="abs" style="left:216px;top:500px;width:301px;height:33px;border-radius:17px;background:#2a2b2e"></div>
  <svg class="abs" style="left:0;top:490px" width="900" height="110" viewBox="0 490 900 110">
    <defs>
      <radialGradient id="ey" cx=".5" cy=".35" r=".75"><stop offset="0" stop-color="#ffd54a"/><stop offset="1" stop-color="#f5a912"/></radialGradient>
      <linearGradient id="hp" x1="0" x2="1" y1="0" y2="1"><stop offset="0" stop-color="#ff7ab0"/><stop offset="1" stop-color="#e8286e"/></linearGradient>
    </defs>
    <!-- sparkling heart -->
    <path d="M233 526.500c-7-4.500-10.500-8.500-10.500-13 0-3.500 2.500-6 5.500-6 2 0 3.800 1 5 3 1.200-2 3-3 5-3 3 0 5.500 2.500 5.500 6 0 4.500-3.500 8.500-10.500 13z" fill="url(#hp)"/>
    <path d="M229 510l.9 2.300 2.300.9-2.300.9-.9 2.300-.9-2.300-2.300-.9 2.300-.9zM237.500 514.500l.7 1.800 1.800.7-1.800.7-.7 1.800-.7-1.800-1.800-.7 1.800-.7zM232 518.500l.6 1.400 1.400.6-1.400.6-.6 1.400-.6-1.400-1.400-.6 1.400-.6z" fill="#ffe27a"/>
    <!-- thumbs up -->
    <g fill="#fbc02d">
      <path d="M262 515.500c2-2 3.500-4.500 3.800-7.500.2-1.600 2.900-1.500 3.300.8.400 2-.1 4-.7 5.500h5.200c2.300 0 2.800 2.700 1.200 3.300 1.300.8 1.100 2.700-.3 3.100 1 .9.700 2.600-.6 2.900.7 1-.1 2.500-1.600 2.500h-6.800c-1.500 0-2.700-.6-3.500-1.400z"/>
      <rect x="257.300" y="515" width="5" height="11" rx="1.600" fill="#f8b62a"/>
    </g>
    <!-- party popper -->
    <g>
      <path d="M290.500 527l4.500-14 9 9z" fill="#f7b52c"/><path d="M292 522.500l2-5.500 5.800 6zM293.700 516.500l1.300-3.500 3 3z" fill="#e85d3a"/>
      <path d="M296.500 512c.5-4 5-3 3.500 0s2.500 4 4.500 1.500c1.500-2 0-4 2-5.500" stroke="#ef6a9a" stroke-width="2.300" fill="none"/><path d="M295 508.500c1.500-2.500 4-1.500 3.500.5" stroke="#e8453c" stroke-width="1.700" fill="none"/>
      <path d="M303 517c2-2 4 0 3 2s1 3 3 2" stroke="#2f8de4" stroke-width="1.700" fill="none"/>
      <circle cx="304.500" cy="509" r="1.400" fill="#e8453c"/><circle cx="308" cy="513.500" r="1.300" fill="#f7c531"/><circle cx="299.500" cy="507.500" r="1.100" fill="#36a852"/><circle cx="308" cy="524" r="1.200" fill="#e8453c"/><circle cx="292" cy="510" r="1.100" fill="#2f8de4"/>
    </g>
    <!-- clapping hands -->
    <g>
      <path d="M325 519c-1.500-3 0-6 2-7.500l4-3.500c1.500-1 3 0 2.500 1.500l2.500-1.500c1.500-.5 2.700 1 1.700 2.300 1.500 0 2.300 1.500 1.300 2.700 1.300.3 1.700 1.800.7 2.800l-5 6c-2.500 2.500-7.500 1.700-9.700-2.800z" fill="#f5a623"/>
      <path d="M328.500 521c-1.500-3 0-6 2-7.500l4-3.500c1.500-1 3 0 2.500 1.500l2.500-1.500c1.500-.5 2.700 1 1.700 2.300 1.500 0 2.300 1.500 1.300 2.700 1.300.3 1.700 1.800.7 2.800l-5 6c-2.500 2.500-7.500 1.700-9.700-2.800z" fill="#fbc02d"/>
      <path d="M338.500 507l.8-2.500M341 508l2-1.800M342.500 510.500l2.500-.6M324 523l-2 1M325.500 525.500l-1.300 1.800" stroke="#9aa0a6" stroke-width="1" fill="none"/>
    </g>
    <!-- joy -->
    <g>
      <circle cx="367" cy="516.500" r="9.300" fill="url(#ey)"/>
      <path d="M361 519.500h12c0 4-2.700 6-6 6s-6-2-6-6z" fill="#5a2d16"/><path d="M362.500 520.300h9v1.700h-9z" fill="#fff"/>
      <path d="M360.500 514.500c1-1.600 3-1.600 4 0M369.500 514.500c1-1.600 3-1.600 4 0" stroke="#5a2d16" stroke-width="1.200" fill="none"/>
      <path d="M356 517c1.500-1.500 4-1.500 5.200 0 .8 2.700-1 4.600-3.200 4.600s-3.500-2.300-2-4.600zM378 517c-1.500-1.500-4-1.500-5.200 0-.8 2.700 1 4.600 3.200 4.600s3.500-2.300 2-4.600z" fill="#3f9fea"/>
    </g>
    <!-- open mouth -->
    <g>
      <circle cx="400" cy="516.500" r="9.300" fill="url(#ey)"/>
      <ellipse cx="400" cy="521.300" rx="2.700" ry="3.300" fill="#5a2d16"/>
      <ellipse cx="396.300" cy="514.200" rx="1.400" ry="1.900" fill="#3a2414"/><ellipse cx="403.700" cy="514.200" rx="1.400" ry="1.900" fill="#3a2414"/>
      <path d="M394.500 510.500c.8-1 2.200-1.200 3.200-.6M402.300 509.900c1-.6 2.400-.4 3.200.6" stroke="#5a2d16" stroke-width=".9" fill="none"/>
    </g>
    <!-- crying -->
    <g>
      <circle cx="433" cy="516.500" r="9.300" fill="url(#ey)"/>
      <path d="M429.500 523c1.800-2 5.200-2 7 0" stroke="#5a2d16" stroke-width="1.300" fill="none"/>
      <ellipse cx="429.200" cy="515.500" rx="1.300" ry="1.700" fill="#3a2414"/><ellipse cx="436.800" cy="515.500" rx="1.300" ry="1.700" fill="#3a2414"/>
      <path d="M427 512.500l3.400-1.500M439 512.500l-3.400-1.500" stroke="#5a2d16" stroke-width="1" fill="none"/>
      <path d="M428.800 518c1.500 2.300 2.200 3.800 2.200 5a2.200 2.200 0 0 1-4.400 0c0-1.200.7-2.700 2.200-5z" fill="#3f9fea"/>
    </g>
    <!-- thinking -->
    <g>
      <circle cx="466.500" cy="516" r="9.300" fill="url(#ey)"/>
      <ellipse cx="463" cy="514.200" rx="1.300" ry="1.600" fill="#3a2414"/><ellipse cx="470" cy="513.700" rx="1.300" ry="1.600" fill="#3a2414"/>
      <path d="M460.500 511.200c1-1.500 3-1.800 4.300-1M468 509.500c1.300-1.200 3.500-1 4.500.3" stroke="#5a2d16" stroke-width="1" fill="none"/>
      <path d="M463.500 519.800c2-1 4.500-1.300 6.500-.8" stroke="#5a2d16" stroke-width="1.100" fill="none"/>
      <path d="M458 522.500c0-2 1.500-3.500 3-4l.8-3c.4-1.300 2.200-1 2.200.5v3l3.500-.4c1.500 0 1.800 1.700.5 2.200l-3 .8c.5 2.700-1.200 5.200-3.800 5.200-2 0-3.200-1.700-3.200-4.300z" fill="#f5a623" stroke="#d98a10" stroke-width=".5"/>
    </g>
    <!-- thumbs down -->
    <g fill="#fbc02d">
      <path d="M503.500 517.500c-2 2-3.500 4.500-3.800 7.500-.2 1.600-2.900 1.500-3.300-.8-.4-2 .1-4 .7-5.500h-5.200c-2.300 0-2.800-2.700-1.200-3.300-1.300-.8-1.100-2.700.3-3.100-1-.9-.7-2.600.6-2.900-.7-1 .1-2.500 1.600-2.500h6.800c1.500 0 2.700.6 3.500 1.400z"/>
      <rect x="503.300" y="507" width="5" height="11" rx="1.600" fill="#f8b62a"/>
    </g>
    <!-- skin tone -->
    <circle cx="543" cy="516.500" r="9.700" fill="none" stroke="#bdc1c6" stroke-width="1.100"/>
    <circle cx="543" cy="516.500" r="7.700" fill="#fcc21b"/>

    <!-- ===== control bar ===== -->
    <rect x="131" y="547" width="74" height="39.500" rx="19.750" fill="#27282b"/>
    <circle cx="185.200" cy="566.750" r="19.750" fill="#333538"/>
    <rect x="212" y="547" width="73" height="39.500" rx="19.750" fill="#27282b"/>
    <circle cx="265.200" cy="566.750" r="19.750" fill="#333538"/>
    <rect x="291.500" y="547" width="46.500" height="39.500" rx="10.500" fill="#a8c7fa"/>
    <rect x="344.500" y="547" width="47" height="39.500" rx="10.500" fill="#a8c7fa"/>
    <rect x="398" y="547" width="46.500" height="39.500" rx="19.750" fill="#333538"/>
    <rect x="451.500" y="547" width="46.500" height="39.500" rx="19.750" fill="#333538"/>
    <rect x="505" y="547" width="29.500" height="39.500" rx="14.750" fill="#333538"/>
    <rect x="542" y="547" width="59.500" height="39.500" rx="19.750" fill="#f9352f"/>
    <!-- dots -->
    <g fill="#a8c7fa"><circle cx="146" cy="566.700" r="1.300"/><circle cx="151" cy="566.700" r="1.300"/><circle cx="156" cy="566.700" r="1.300"/></g>
    <!-- mic -->
    <rect x="181.900" y="557.500" width="5.600" height="11" rx="2.800" fill="#e8eaed"/>
    <path d="M178.800 565.500c0 8 11.800 8 11.800 0M184.700 571.500v3.500" stroke="#e8eaed" stroke-width="1.700" fill="none"/>
    <!-- caret -->
    <path d="M227 568.500l4-4 4 4" stroke="#9aa0a6" stroke-width="1.500" fill="none"/>
    <!-- camera -->
    <rect x="256.800" y="561.200" width="11.800" height="11.200" rx="1.200" fill="none" stroke="#e8eaed" stroke-width="1.900"/>
    <path d="M269.500 566l4.500-3.800v9.400l-4.500-3.800z" fill="#e8eaed"/>
    <!-- present -->
    <g fill="none" stroke="#0b3d8c" stroke-width="1.700">
      <rect x="308" y="560.500" width="14" height="9.500" rx=".8"/>
      <path d="M305.500 573.200h19" stroke-width="1.800"/>
    </g>
    <path d="M315 562.300l3.300 3.300h-2.200v2.900h-2.200v-2.900h-2.200z" fill="#0b3d8c"/>
    <!-- emoji btn -->
    <circle cx="368" cy="566.700" r="7.300" fill="none" stroke="#0b3d8c" stroke-width="1.800"/>
    <circle cx="365.300" cy="564.500" r="1.200" fill="#0b3d8c"/><circle cx="370.700" cy="564.500" r="1.200" fill="#0b3d8c"/>
    <path d="M363.800 568h8.400c-.4 2.400-2 3.700-4.200 3.700s-3.800-1.300-4.200-3.700z" fill="#0b3d8c"/>
    <!-- cc -->
    <rect x="413.300" y="560.300" width="16" height="13" rx="1.500" fill="#e8eaed"/>
    <path d="M419.700 565.300h-2.900v3h2.900M425.800 565.300h-2.900v3h2.900" stroke="#333538" stroke-width="1.500" fill="none"/>
    <!-- hand -->
    <path d="M469.500 566v-6.200c0-1.500 2-1.500 2 0v-1.300c0-1.500 2.100-1.500 2.100 0v1c0-1.500 2.100-1.500 2.100 0v1.600c0-1.400 2-1.400 2 0v9.400c0 3-2.300 5-5.300 5-2.400 0-3.700-1-4.800-2.800l-3-5.200c-.6-1.200.8-2 1.700-1.100l3.200 3.100z" fill="none" stroke="#e8eaed" stroke-width="1.500" stroke-linejoin="round"/>
    <path d="M471.500 559.800v6M473.600 558.500v7.300M475.700 559.500v6.500" stroke="#e8eaed" stroke-width="1.100"/>
    <!-- more -->
    <g fill="#e8eaed"><circle cx="519.700" cy="561.300" r="1.700"/><circle cx="519.700" cy="566.700" r="1.700"/><circle cx="519.700" cy="572.100" r="1.700"/></g>
    <!-- hang up -->
    <path d="M562 568.300c5.500-5 14-5 19.500 0 .6.600.6 1.300 0 1.900l-1.700 1.700c-.5.500-1.200.5-1.700.1l-2.300-1.600c-.4-.3-.6-.7-.6-1.200v-1.700c-2.300-.8-4.700-.8-7 0v1.700c0 .5-.2.900-.6 1.200l-2.300 1.600c-.5.400-1.200.4-1.700-.1l-1.700-1.700c-.5-.6-.5-1.300.1-1.900z" fill="#fff"/>
    <!-- right icons -->
    <circle cx="749.700" cy="566.700" r="7.600" fill="none" stroke="#fff" stroke-width="1.800"/>
    <path d="M749.700 565.500v5.200" stroke="#fff" stroke-width="1.900"/><circle cx="749.700" cy="562.800" r="1.100" fill="#fff"/>
    <g fill="none" stroke="#fff" stroke-width="1.800">
      <circle cx="786.800" cy="563.200" r="2.900"/>
      <path d="M780.800 573.600v-1.400c0-2.600 4-3.800 6-3.800s6 1.200 6 3.800v1.400z"/>
    </g>
    <path d="M791.500 559.500a3.800 3.800 0 0 1 0 7.400a5.500 5.500 0 0 0 0-7.400zM794.600 568.200c2.600.6 5 1.800 5 4v2.300h-4v-2.300c0-1.600-.4-2.900-1-4z" fill="#fff"/>
    <circle cx="800" cy="548" r="8.900" fill="#5a5d62"/>
    <path d="M822.800 559h15v11.700h-11.600l-3.400 3.400z" fill="none" stroke="#fff" stroke-width="1.800" stroke-linejoin="round"/>
    <path d="M826 563h8.600M826 566.300h8.600" stroke="#fff" stroke-width="1.400"/>
    <g fill="#fff"><circle cx="864.5" cy="561.3" r="2"/><circle cx="870.0" cy="561.3" r="2"/><circle cx="875.5" cy="561.3" r="2"/><circle cx="864.5" cy="566.7" r="2"/><circle cx="870.0" cy="566.7" r="2"/><circle cx="875.5" cy="566.7" r="2"/><circle cx="864.5" cy="572.1" r="2"/><circle cx="870.0" cy="572.1" r="2"/><circle cx="875.5" cy="572.1" r="2"/></g>
  </svg>
  <div class="abs" style="left:792px;top:542px;width:16px;text-align:center;color:#e8eaed;font-size:9.500px;font-weight:bold;line-height:12px">4</div>
</div>
</body>
</html>
